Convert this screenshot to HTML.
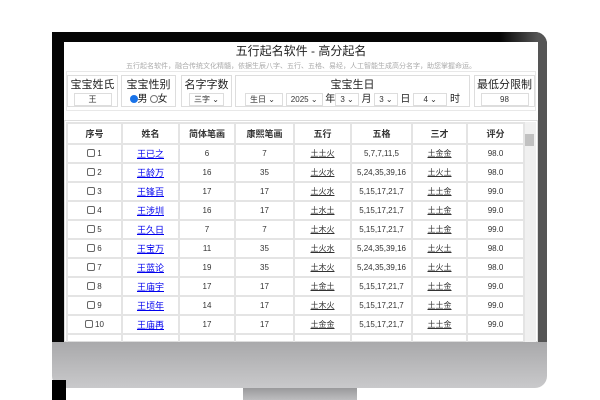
<!DOCTYPE html>
<html><head><meta charset="utf-8"><style>
*{margin:0;padding:0;box-sizing:border-box}
body{width:600px;height:400px;background:#fff;position:relative;overflow:hidden;font-family:"Liberation Sans","Noto Sans CJK SC",sans-serif;color:#222}
.a{position:absolute}
.bez{left:52px;top:32px;width:495px;height:315px;background:#050505;border-top-right-radius:12px}
.bezr{left:500px;top:32px;width:47px;height:315px;background:linear-gradient(90deg,#050505,#555 80%);border-top-right-radius:12px}
.scr{left:64px;top:42px;width:474px;height:300px;background:#fff;overflow:hidden}
.chin{left:52px;top:342px;width:495px;height:46px;background:linear-gradient(180deg,#a9a9ab,#c9c9cb);border-radius:0 0 12px 12px}
.stand{left:243px;top:388px;width:114px;height:12px;background:linear-gradient(#9a9a9c,#bdbdbf)}
.lstrip{left:52px;top:380px;width:14px;height:20px;background:#000}
.box{position:absolute;top:33px;height:32px;border:1px solid #ddd;text-align:center;font-size:11px;line-height:14px;padding-top:2px}
.in{display:inline-block;border:1px solid #ddd;font-size:8px;line-height:11px;padding:0 4px;color:#333}
table{position:absolute;left:2px;top:80px;border-collapse:collapse;font-size:8px;width:457px;table-layout:fixed}
td,th{border:2px solid #e4e4e4;text-align:center;height:19px;padding:0;color:#333}
th{font-size:9px;font-weight:bold;height:21px}
td a{color:#00e;text-decoration:underline;font-size:9px}
.u{text-decoration:underline}
.cb{display:inline-block;width:8px;height:8px;border:1px solid #666;border-radius:2px;vertical-align:-1px;margin-right:2px}
</style></head><body>
<div class="a bez"></div><div class="a bezr"></div>
<div class="a chin"></div><div class="a lstrip"></div><div class="a stand"></div>
<div class="a scr">
 <div class="a" style="left:0;top:0;width:474px;text-align:center;font-size:12px;line-height:16px;top:1px;color:#222">五行起名软件 - 高分起名</div>
 <div class="a" style="left:0;top:19px;width:474px;text-align:center;font-size:7px;color:#aaa">五行起名软件，融合传统文化精髓，依据生辰八字、五行、五格、易经，人工智能生成高分名字，助您掌握命运。</div>
 <div class="a" style="left:2px;top:29px;width:470px;height:40px;border:1px solid #e8e8e8"></div>
 <div class="box" style="left:3px;width:51px">宝宝姓氏<br><span class="in" style="width:38px">王</span></div>
 <div class="box" style="left:57px;width:55px">宝宝性别<br><span style="font-size:10px"><span style="display:inline-block;width:8px;height:8px;border-radius:50%;background:#1a73e8;vertical-align:-1px"></span>男<span style="display:inline-block;width:8px;height:8px;border-radius:50%;border:1px solid #777;vertical-align:-1px;margin-left:2px"></span>女</span></div>
 <div class="box" style="left:117px;width:51px">名字字数<br><span class="in">三字 ⌄</span></div>
 <div class="box" style="left:171px;width:235px">宝宝生日<br><span style="font-size:10px"><span class="in" style="width:38px;text-align:left">生日 ⌄</span> <span class="in">2025 ⌄</span> 年<span class="in">3 ⌄</span> 月 <span class="in">3 ⌄</span> 日 <span class="in" style="width:34px">4 ⌄</span> 时</span></div>
 <div class="box" style="left:410px;width:61px">最低分限制<br><span class="in" style="width:48px">98</span></div>
 <div class="a" style="left:0;top:78px;width:474px;height:222px;border:1px solid #ddd"></div>
 <div class="a" style="left:459px;top:80px;width:13px;height:220px;background:#f0f0f0"><div style="margin:12px 2px 0;height:12px;background:#c1c1c1"></div></div>
 <table>
 <colgroup><col style="width:55px"><col style="width:57px"><col style="width:56px"><col style="width:59px"><col style="width:57px"><col style="width:61px"><col style="width:55px"><col style="width:57px"></colgroup>
 <tr><th>序号</th><th>姓名</th><th>简体笔画</th><th>康熙笔画</th><th>五行</th><th>五格</th><th>三才</th><th>评分</th></tr>
 <tr><td><span class="cb"></span>1</td><td><a>王已之</a></td><td>6</td><td>7</td><td class="u">土土火</td><td>5,7,7,11,5</td><td class="u">土金金</td><td>98.0</td></tr>
 <tr><td><span class="cb"></span>2</td><td><a>王龄万</a></td><td>16</td><td>35</td><td class="u">土火水</td><td>5,24,35,39,16</td><td class="u">土火土</td><td>98.0</td></tr>
 <tr><td><span class="cb"></span>3</td><td><a>王锋百</a></td><td>17</td><td>17</td><td class="u">土火水</td><td>5,15,17,21,7</td><td class="u">土土金</td><td>99.0</td></tr>
 <tr><td><span class="cb"></span>4</td><td><a>王涉圳</a></td><td>16</td><td>17</td><td class="u">土水土</td><td>5,15,17,21,7</td><td class="u">土土金</td><td>99.0</td></tr>
 <tr><td><span class="cb"></span>5</td><td><a>王久日</a></td><td>7</td><td>7</td><td class="u">土木火</td><td>5,15,17,21,7</td><td class="u">土土金</td><td>99.0</td></tr>
 <tr><td><span class="cb"></span>6</td><td><a>王宝万</a></td><td>11</td><td>35</td><td class="u">土火水</td><td>5,24,35,39,16</td><td class="u">土火土</td><td>98.0</td></tr>
 <tr><td><span class="cb"></span>7</td><td><a>王蓝论</a></td><td>19</td><td>35</td><td class="u">土木火</td><td>5,24,35,39,16</td><td class="u">土火土</td><td>98.0</td></tr>
 <tr><td><span class="cb"></span>8</td><td><a>王庙宇</a></td><td>17</td><td>17</td><td class="u">土金土</td><td>5,15,17,21,7</td><td class="u">土土金</td><td>99.0</td></tr>
 <tr><td><span class="cb"></span>9</td><td><a>王顷年</a></td><td>14</td><td>17</td><td class="u">土木火</td><td>5,15,17,21,7</td><td class="u">土土金</td><td>99.0</td></tr>
 <tr><td><span class="cb"></span>10</td><td><a>王庙再</a></td><td>17</td><td>17</td><td class="u">土金金</td><td>5,15,17,21,7</td><td class="u">土土金</td><td>99.0</td></tr>
 <tr><td></td><td></td><td></td><td></td><td></td><td></td><td></td><td></td></tr>
 </table>
</div>
</body></html>
